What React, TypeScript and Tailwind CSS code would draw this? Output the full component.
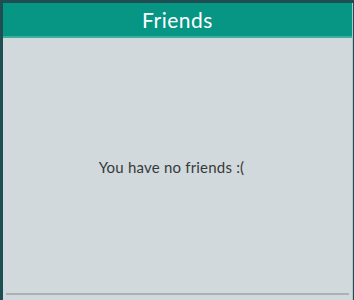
import React from 'react';

export default function App() {
  return (
    <div
      className="w-[354px] h-[300px] bg-[#1e4d52] pl-[3px] pt-[3px] overflow-hidden"
      style={{ fontFamily: 'Lato, "Noto Sans", sans-serif' }}
    >
      <div className="flex flex-col h-full w-[350px] border-r border-[#b9c4c7]">
        <div className="h-[35px] bg-[#079584] border-b-2 border-[#3cae9f] flex items-center justify-center">
          <h1 className="text-white text-[21px] leading-none tracking-wide">Friends</h1>
        </div>
        <div className="flex-1 bg-[#d1d9dc] flex flex-col">
          <div className="flex-1 flex items-center justify-center pr-[12px] pt-[3px]">
            <p className="text-[#35393b] text-[15px] tracking-[0.2px]">You have no friends :(</p>
          </div>
          <div className="mx-[3px] mb-[5px] h-[2px] bg-[#a8b1b4]" />
        </div>
      </div>
    </div>
  );
}
